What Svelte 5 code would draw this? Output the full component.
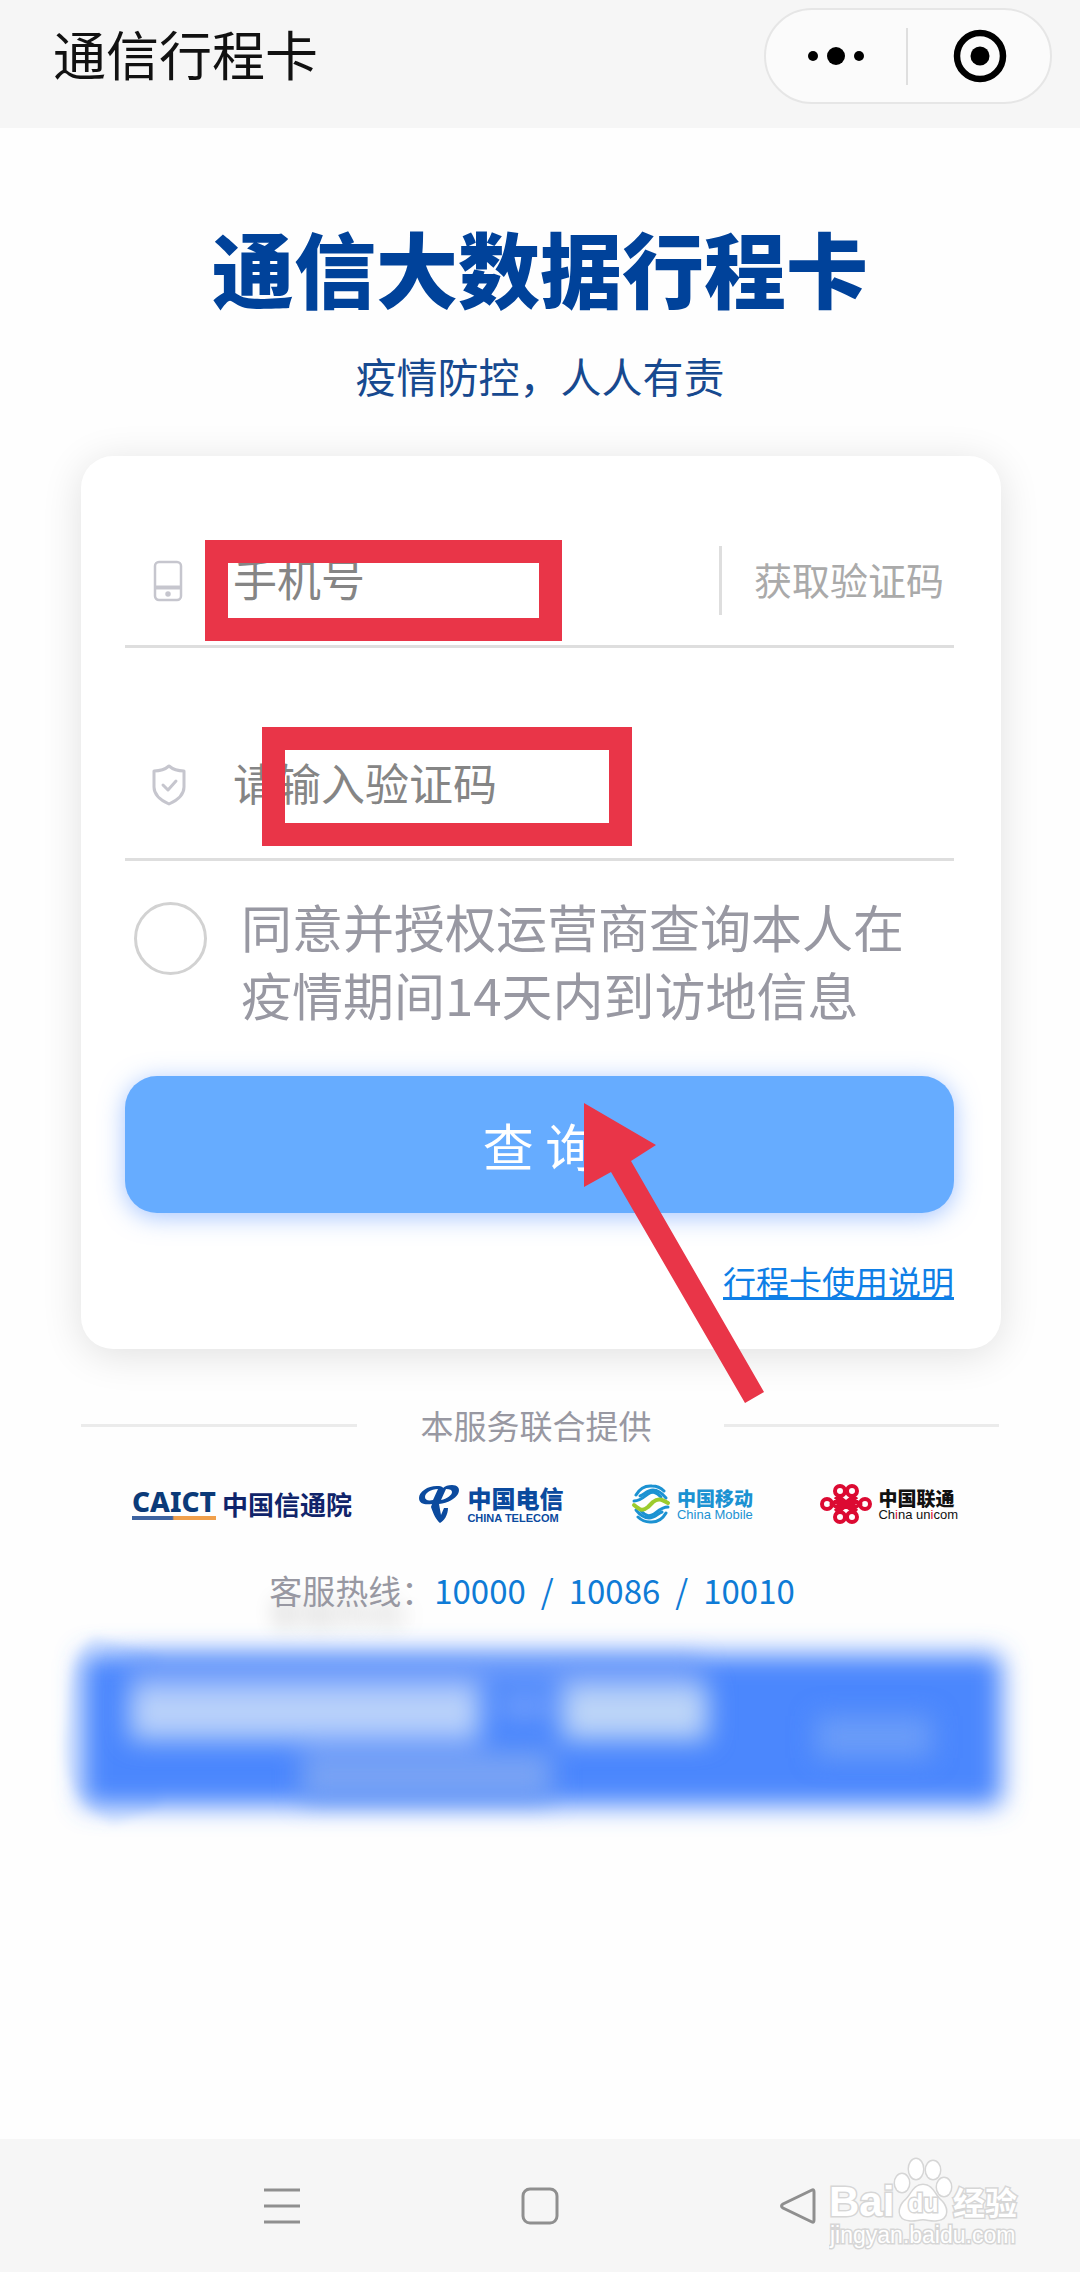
<script>
  let phone = $state('');
  let code = $state('');
  let agreed = $state(false);
</script>

<div class="page">
  <header class="topbar">
    <h2>通信行程卡</h2>
    <div class="capsule">
      <button type="button" aria-label="更多">
        <svg width="60" height="60" viewBox="0 0 60 60"><circle cx="7" cy="30" r="5" /><circle cx="30" cy="30" r="9" /><circle cx="53" cy="30" r="5" /></svg>
      </button>
      <span class="split"></span>
      <button type="button" aria-label="关闭">
        <svg width="60" height="60" viewBox="0 0 60 60"><circle cx="31" cy="30" r="23" fill="none" stroke="#000" stroke-width="6.500" /><circle cx="31" cy="30" r="9.500" /></svg>
      </button>
    </div>
  </header>

  <main>
    <h1>通信大数据行程卡</h1>
    <p class="slogan">疫情防控，人人有责</p>

    <form class="card" onsubmit={(e) => e.preventDefault()}>
      <div class="field">
        <label for="phone" aria-label="手机号">
          <svg width="36" height="44" viewBox="0 0 36 44" fill="none" stroke="#c6c6ce" stroke-width="2.500"><rect x="4" y="3" width="26" height="38" rx="4" /><path d="M4 28.500h26" stroke-width="4" /><circle cx="17" cy="35" r="1.500" fill="#c6c6ce" /></svg>
        </label>
        <input id="phone" type="tel" placeholder="手机号" bind:value={phone} />
        <button type="button" class="get-code">获取验证码</button>
      </div>
      <div class="field second">
        <label for="code" aria-label="验证码">
          <svg width="36" height="44" viewBox="0 0 36 44" fill="none" stroke="#c6c6ce" stroke-width="3" stroke-linejoin="round" stroke-linecap="round"><path d="M18 3C14 6.500 9 8 3 8v16c0 8 6 13 15 17 9-4 15-9 15-17V8c-6 0-11-1.500-15-5Z" /><path d="m12 22 5 5 8-9" /></svg>
        </label>
        <input id="code" type="text" placeholder="请输入验证码" bind:value={code} />
      </div>
      <div class="consent">
        <input id="agree" type="checkbox" bind:checked={agreed} />
        <label for="agree">同意并授权运营商查询本人在疫情期间14天内到访地信息</label>
      </div>
      <button type="submit" class="submit">查 询</button>
      <a class="guide" href="#guide">行程卡使用说明</a>

      <span class="mark mark-phone"></span>
      <span class="mark mark-code"></span>
      <svg class="arrow" width="184" height="304" viewBox="0 0 184 304" aria-hidden="true"><path fill="#e93548" d="M2 2 74 44 49 60 182 291 163 302 29 71 2 86Z" /></svg>
    </form>

    <div class="provider"><span>本服务联合提供</span></div>

    <div class="logos">
      <div class="logo caict"><b>CAICT</b><strong>中国信通院</strong></div>
      <div class="logo telecom">
        <svg width="42" height="40" viewBox="0 0 42 40" fill="#0b4a9e"><path fill-rule="evenodd" d="M20 2C10 1 0 7 0 14c0 6 6 7 13 6l-1 3c2 6 5 13 9 16 4-2 8-8 8-15h-4l-3 7-2-11c9-1 16-5 19-10 3-6-1-9-6-9-4 0-7 1-9 3 0-1-2-2-4-2ZM19 5l-5 11c-5 1-8 0-8-3 0-4 6-8 13-8Zm8 0c4 0 6 1 6 3 0 3-5 7-11 8Z" /></svg>
        <div><strong>中国电信</strong><small>CHINA TELECOM</small></div>
      </div>
      <div class="logo mobile">
        <svg width="40" height="40" viewBox="0 0 40 40" fill="none" stroke-width="3" stroke-linecap="round" stroke-linejoin="round"><g stroke="#1c92d2"><path d="M5 11C9 4 15 1.500 21 2c5 0 9 2 12 5" /><path d="M3 17c6 0 10-4 14-7 5-3 8-2 13 3" /><path d="M9 12c4-1 7-6 13-6 5 0 9 3 13 8" /><path d="M35 29c-4 7-10 9.500-16 9-5 0-9-2-12-5" /><path d="M37 23c-6 0-10 4-14 7-5 3-8 2-13-3" /><path d="M31 28c-4 1-7 6-13 6-5 0-9-3-13-8" /></g><path stroke="#9ccb2d" stroke-width="4" d="M3 21c7 6 9 6 14 2l5-5c5-4 8-3 15 1" /></svg>
        <div><strong>中国移动</strong><small>China Mobile</small></div>
      </div>
      <div class="logo unicom">
        <svg width="52" height="40" viewBox="0 0 52 40" fill="none" stroke="#dc0a32" stroke-width="4"><circle cx="7" cy="20" r="5" /><circle cx="45" cy="20" r="5" /><circle cx="20" cy="7" r="5" /><circle cx="32" cy="7" r="5" /><circle cx="20" cy="33" r="5" /><circle cx="32" cy="33" r="5" /><path stroke-width="3.500" d="M16 10l21 17M36 10 15 27M16 30l21-17M36 30 15 13M12 20l4-3 4 3-4 3ZM40 20l-4-3-4 3 4 3Z" /></svg>
        <div><strong>中国联通</strong><small>Ch<i>i</i>na un<i>i</i>com</small></div>
      </div>
    </div>

    <p class="hotline"><span>客服热线：</span><a href="tel:10000">10000</a><em>/</em><a href="tel:10086">10086</a><em>/</em><a href="tel:10010">10010</a></p>

    <svg class="banner" viewBox="0 0 1080 240" aria-hidden="true">
      <defs>
        <filter id="soft" x="-10%" y="-40%" width="120%" height="180%"><feGaussianBlur stdDeviation="13" /></filter>
        <filter id="glow" x="-30%" y="-120%" width="160%" height="340%"><feGaussianBlur stdDeviation="13" /></filter>
        <filter id="haze" x="-60%" y="-20%" width="220%" height="140%"><feGaussianBlur stdDeviation="5" /></filter>
      </defs>
      <path d="M94 20C66 40 70 86 66 110 58 160 78 190 114 208L160 190V40Z" fill="#e6effe" filter="url(#haze)" />
      <rect x="82" y="38" width="920" height="152" rx="10" fill="#4b87fd" filter="url(#soft)" />
      <g filter="url(#glow)">
        <rect x="130" y="68" width="350" height="56" fill="#b8d0fa" />
        <rect x="562" y="68" width="146" height="56" fill="#bcd4f8" />
        <rect x="500" y="84" width="50" height="14" fill="#84aaf9" />
        <rect x="130" y="44" width="570" height="20" fill="#76a1f8" opacity=".7" />
        <rect x="302" y="136" width="250" height="48" fill="#78a3f4" />
        <rect x="816" y="100" width="116" height="42" fill="#6b9cf8" />
      </g>
    </svg>
  </main>

  <nav>
    <button type="button" aria-label="任务"><svg width="40" height="40" viewBox="0 0 40 40"><path d="M2 4h36M2 20h36M2 36h36" /></svg></button>
    <button type="button" aria-label="主页"><svg width="40" height="40" viewBox="0 0 40 40"><rect x="3" y="3" width="34" height="34" rx="7" /></svg></button>
    <button type="button" aria-label="返回"><svg width="40" height="40" viewBox="0 0 40 40"><path d="M34 4q2-1 2 2v28q0 3-2 2L5 22q-3-2 0-4Z" /></svg></button>
    <svg class="watermark" width="200" height="100" viewBox="0 0 200 100" role="img" aria-label="Baidu 经验">
      <text x="0" y="64" font-size="42" font-weight="700">Bai</text>
      <ellipse cx="73" cy="31" rx="7" ry="9" /><ellipse cx="87" cy="17" rx="7" ry="10" /><ellipse cx="104" cy="18" rx="7" ry="9" /><ellipse cx="115" cy="35" rx="7" ry="9" />
      <path d="M94 33c-9 0-11 9-17 15-8 7-9 19 3 20 5 1 9-1 14-1s9 2 14 1c12-1 11-13 3-20-6-6-8-15-17-15Z" />
      <text x="79" y="60" font-size="25" font-weight="700">du</text>
      <text class="cjk" x="124" y="63" font-size="32" font-weight="700">经验</text>
      <text class="url" x="1" y="91" font-size="23">jingyan.baidu.com</text>
    </svg>
  </nav>
</div>

<style>
  :global(body) { margin: 0; background: #fefefe; }
  .page { min-height: 100vh; display: flex; flex-direction: column; background: #fefefe; font-family: "Noto Sans CJK SC", sans-serif; }
  h1, h2, p { margin: 0; }
  button { border: 0; padding: 0; background: none; font: inherit; cursor: pointer; }
  svg { display: block; flex: none; }

  .topbar { height: 128px; box-sizing: border-box; padding: 8px 28px 24px 53px; background: #f6f6f6; display: flex; align-items: center; justify-content: space-between; }
  h2 { padding-bottom: 6px; font-family: "AR PL UKai CN", KaiTi, STKaiti, "Noto Sans CJK SC", serif; font-size: 53px; font-weight: 400; line-height: 80px; color: #111; }
  .capsule { width: 288px; height: 96px; box-sizing: border-box; border: 2px solid #e6e6e6; border-radius: 48px; background: #fbfbfb; display: flex; align-items: center; }
  .capsule button { flex: 1; display: flex; justify-content: center; }
  .capsule button:first-child { flex: 0 0 140px; }
  .split { width: 2px; height: 57px; background: #dfdfdf; }

  main { flex: 1; }
  h1 { margin-top: 79px; text-align: center; font-size: 82px; font-weight: 900; line-height: 120px; color: #00429a; }
  .slogan { margin-top: 18px; text-align: center; font-size: 41px; line-height: 60px; color: #17498f; }

  .card { position: relative; margin: 51px 79px 0 81px; padding: 60px 47px 43px 44px; border-radius: 32px; background: #fff; box-shadow: 0 6px 40px rgba(0, 0, 0, .12); }
  .field { height: 132px; box-sizing: border-box; border-bottom: 3px solid #dedede; padding-left: 26px; display: flex; align-items: center; }
  .field.second { height: 149px; margin-top: 64px; }
  .field label { width: 82px; }
  .field input { flex: 1; min-width: 0; height: 72px; border: 0; padding: 0 0 6px; outline: 0; background: none; font: inherit; font-size: 44px; color: #333; }
  .field input::placeholder { color: #858585; opacity: 1; }
  .get-code { height: 69px; border-left: 3px solid #dedede; padding: 0 10px 4px 32px; font-size: 38px; line-height: 65px; color: #aaa; }

  .consent { margin-top: 31px; padding-left: 9px; display: flex; align-items: flex-start; gap: 34px; }
  .consent input { appearance: none; flex: none; width: 73px; height: 73px; margin: 10px 0 0; border: 3px solid #d2d2d2; border-radius: 50%; background: #fff; }
  .consent input:checked { border-width: 20px; border-color: #66acff; }
  .consent label { flex: 1; font-size: 51px; line-height: 68px; color: #9898a2; }
  .submit { display: block; width: 100%; height: 137px; margin-top: 48px; border-radius: 32px; background: #66acff; box-shadow: 0 4px 24px rgba(75, 140, 255, .5); color: #fff; font-size: 51px; }
  .guide { display: block; width: fit-content; margin: 44px 0 0 auto; padding-bottom: 1px; font-size: 33px; line-height: 48px; color: #0f7fe6; text-underline-offset: 2px; }

  .mark { position: absolute; box-sizing: border-box; border: 23px solid #e93548; pointer-events: none; }
  .mark-phone { left: 124px; top: 84px; width: 357px; height: 101px; }
  .mark-code { left: 181px; top: 271px; width: 370px; height: 119px; }
  .arrow { position: absolute; left: 501px; top: 645px; pointer-events: none; }

  .provider { margin: 52px 81px 0; display: flex; align-items: center; font-size: 33px; line-height: 48px; color: #9898a2; }
  .provider span { padding: 0 72px 0 64px; }
  .provider::before, .provider::after { content: ""; flex: 1; height: 3px; background: #ebebeb; }

  .logos { margin: 35px 122px 0 132px; height: 40px; display: flex; align-items: center; justify-content: space-between; }
  .logo { display: flex; align-items: center; gap: 6px; white-space: nowrap; }
  .logo strong, .logo small { display: block; }
  .caict b { font-family: "Noto Sans", sans-serif; font-size: 28px; line-height: 25px; font-weight: 800; padding-bottom: 2px; border-bottom: 4px solid; border-image: linear-gradient(90deg, #3d63a0 48%, #f0a04c 50%) 1; color: #0b3a78; }
  .caict strong { font-size: 26px; line-height: 32px; color: #10246a; }
  .telecom { color: #0b4a9e; }
  .telecom strong { font-size: 24px; line-height: 28px; font-weight: 900; }
  .telecom small, .mobile small, .unicom small { font-family: "Liberation Sans", sans-serif; line-height: 12px; }
  .telecom small { font-size: 11px; font-weight: 700; }
  .mobile { color: #1c92d2; }
  .mobile strong, .unicom strong { font-size: 19px; line-height: 22px; font-weight: 900; }
  .mobile small, .unicom small { font-size: 13px; }
  .unicom { color: #111; }
  .unicom i { font-style: normal; color: #dc0a32; }

  .hotline { margin: 42px 16px 0 0; padding-bottom: 2px; display: flex; justify-content: center; font-size: 33px; line-height: 48px; color: #0f7bd6; }
  .hotline span { color: #9898a2; text-shadow: 0 22px 20px rgba(0, 0, 0, .2); }
  .hotline a { color: inherit; text-decoration: none; }
  .hotline em { font-style: normal; margin: 0 15px; }
  .banner { width: 100%; height: auto; }

  nav { position: relative; height: 133px; background: #f6f6f6; display: flex; align-items: center; justify-content: space-around; padding: 0 153px; }
  nav button svg { fill: none; stroke: #8f8f8f; stroke-width: 3; }
  .watermark { position: absolute; right: 51px; top: 13px; font-family: "Liberation Sans", sans-serif; fill: #fff; stroke: #d6d6d6; stroke-width: 3; paint-order: stroke; }
  .watermark .cjk { font-family: "Noto Sans CJK SC", sans-serif; }
</style>
